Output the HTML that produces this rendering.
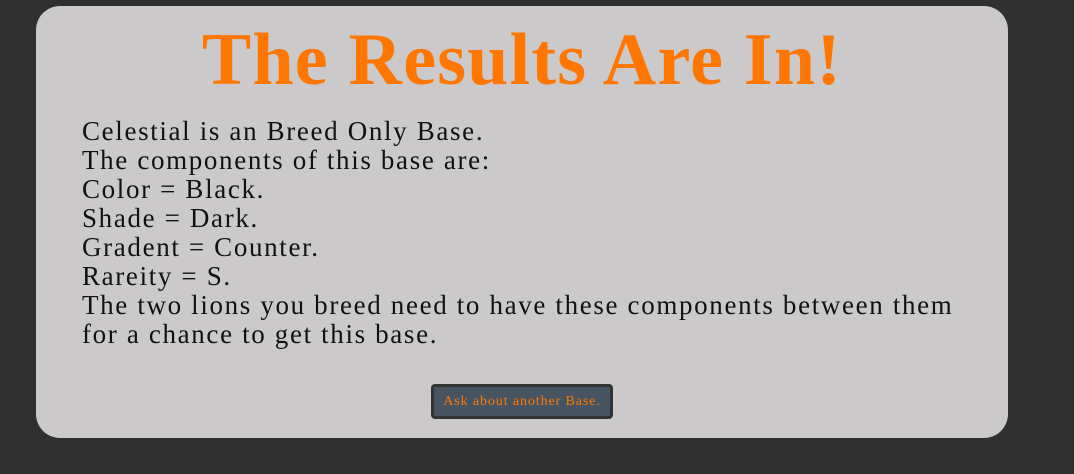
<!DOCTYPE html>
<html><head><style>
html,body{margin:0;padding:0;background:#313031;width:1074px;height:474px;overflow:hidden}
.card{position:absolute;left:36px;top:6px;width:972px;height:432px;background:#cbc9ca;border-radius:24px}
h1{position:absolute;left:0;width:972px;top:12px;margin:0;text-align:center;font:bold 74px/84px "Liberation Serif",serif;color:#ff7700;letter-spacing:1.2px}
.t{position:absolute;left:46px;top:111px;font:27px/29px "Liberation Serif",serif;color:#111;letter-spacing:1.65px}
.btn{position:absolute;left:395px;top:378px;width:176px;height:29px;background:#475462;border:3px solid #333;border-radius:4px;color:#ff7700;font:14px/29px "Liberation Serif",serif;text-align:center;letter-spacing:0.9px}
</style></head><body>
<div class="card">
<h1>The Results Are In!</h1>
<div class="t">Celestial is an Breed Only Base.<br>The components of this base are:<br>Color = Black.<br>Shade = Dark.<br>Gradent = Counter.<br>Rareity = S.<br>The two lions you breed need to have these components between them<br>for a chance to get this base.</div>
<div class="btn">Ask about another Base.</div>
</div>
</body></html>
